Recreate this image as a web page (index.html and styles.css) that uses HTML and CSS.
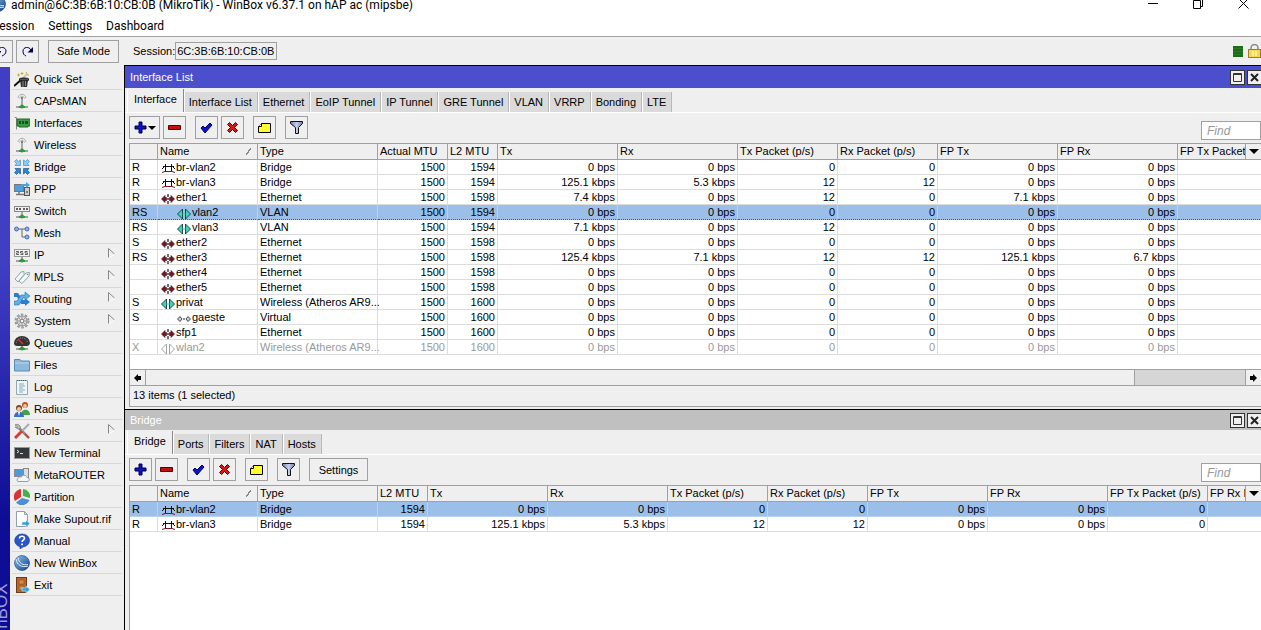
FILE: index.html
```html
<!DOCTYPE html>
<html lang="en">
<head>
  <meta charset="UTF-8" />
  <meta name="viewport" content="width=device-width, initial-scale=1.0"/>
  <title>WinBox</title>
  <link rel="stylesheet" href="styles.css">
</head>
<body>

  <!-- Icon set -->
  <svg class="icon-defs" aria-hidden="true">
    <defs>
      <linearGradient id="ballGrad" x1="0" y1="0" x2="1" y2="1">
        <stop offset="0" stop-color="#8fc3ee"/><stop offset="1" stop-color="#0e3f86"/>
      </linearGradient>
      <linearGradient id="funnelGrad" x1="0" y1="0" x2="1" y2="0">
        <stop offset="0" stop-color="#6f7fb0"/><stop offset="0.5" stop-color="#c4d0ec"/><stop offset="1" stop-color="#6f7fb0"/>
      </linearGradient>
      <g id="stand">
        <path d="M2 14h12" stroke="#555" /><path d="M5 14h6" stroke="#2f9a3a" stroke-width="2"/><circle cx="8" cy="13.5" r="2" fill="#2f9a3a"/>
      </g>
      <symbol id="quickset" viewBox="0 0 16 16">
        <path d="M0 15L8 8" stroke="#111" stroke-width="2"/><path d="M8 8l5-5" stroke="#bbb" stroke-width="1.500"/>
        <path d="M6 9h8l-1 7H7z" fill="#333"/><ellipse cx="10" cy="8.500" rx="5" ry="1.500" fill="#555" stroke="#111"/>
        <path d="M3 4h3M4.500 2.500v3M8 1v3M6.500 2.500h3M12 1l1 2M13 4h2" stroke="#c9b22c"/><path d="M9 10v6M11.500 10v5" stroke="#888"/>
      </symbol>
      <symbol id="antenna" viewBox="0 0 16 16">
        <path d="M4 5c1-5 7-5 8 0M5.500 5.500c1-3 4-3 5 0" fill="none" stroke="#aaa"/>
        <path d="M8 5v8" stroke="#777" stroke-width="1.200"/><circle cx="8" cy="5" r="1" fill="#666"/><use href="#stand"/>
      </symbol>
      <symbol id="card" viewBox="0 0 16 16">
        <path d="M.5 2.500h2v12" fill="none" stroke="#888"/><path d="M3 4h13v7h-2v1H5v-1H3z" fill="#3c9a45" stroke="#1e6a28"/>
        <path d="M5 6h2v3H5zM8 6h2v3H8zM11 6h3v3h-3z" fill="#1c5023"/>
      </symbol>
      <symbol id="bridge" viewBox="0 0 16 16">
        <g fill="#8fcaf0" stroke="#3f8fca" stroke-width=".7">
          <path d="M.5 2.500L2.500.5l2 2L6.500 1v5.500H1L2.500 4.500z"/><path d="M15.500 2.500l-2-2-2 2L9.500 1v5.500H15l-1.500-2z"/>
        </g>
        <g fill="#2f86d0" stroke="#1b5a98" stroke-width=".7">
          <path d="M.5 13.500l2 2 2-2 2 1.500V9.500H1l1.500 2z"/><path d="M15.500 13.500l-2 2-2-2-2 1.500V9.500H15l-1.500 2z"/>
        </g>
      </symbol>
      <symbol id="ppp" viewBox="0 0 16 16">
        <rect x=".5" y="3.500" width="9" height="7" fill="#4da0dc" stroke="#777"/><path d="M2 13.500h8M5 11v2" stroke="#777" stroke-width="1.500"/>
        <rect x="10.500" y="6.500" width="5" height="8" fill="#ccc" stroke="#555"/><path d="M12 11h2" stroke="#333"/>
        <path d="M7 3h5V1l4 3-4 3V5H7z" fill="#4aa3e0"/>
      </symbol>
      <symbol id="switch" viewBox="0 0 16 16">
        <rect x=".5" y="3.500" width="15" height="5" fill="#eee" stroke="#888"/>
        <path d="M2 6h2M5 6h2M9 6h2M12 6h2" stroke="#333" stroke-width="1.500"/><path d="M8 9v4" stroke="#666"/><use href="#stand"/>
      </symbol>
      <symbol id="mesh" viewBox="0 0 16 16">
        <path d="M4 4h8M8 4v8h4" fill="none" stroke="#666"/>
        <g fill="#8fb0ee" stroke="#4a68b8"><circle cx="2.500" cy="4" r="2"/><circle cx="13" cy="4" r="2"/><circle cx="13" cy="12" r="2"/></g>
      </symbol>
      <symbol id="ip" viewBox="0 0 16 16">
        <rect x=".5" y="2.500" width="15" height="7" fill="#f2f2f2" stroke="#999"/>
        <path d="M2 4.500h2.500V6H2.500v1.500H5M9 4.500H6.500V6H9v1.500H6.500M13.500 4.500H11V6h2.500v1.500H11" fill="none" stroke="#555" stroke-width=".9"/><path d="M8 10v3" stroke="#666"/><use href="#stand"/>
      </symbol>
      <symbol id="mpls" viewBox="0 0 16 16">
        <path d="M1 10l6-7 3-.5 0 3-6 7.500z" fill="#f4f8f8" stroke="#8aa5aa"/><path d="M5 12l7-8 3.500-.5-.5 3.500-7 7.500z" fill="#f4f8f8" stroke="#8aa5aa"/>
        <circle cx="13.500" cy="5.500" r=".8" fill="#77949a"/>
      </symbol>
      <symbol id="routing" viewBox="0 0 16 16">
        <path d="M0 2h4l5 7h2V7l5 4-5 4v-2H7L3 6H0z" fill="#2a7fc8"/>
        <path d="M0 14v-4h3l4-6h4V1l5 4-5 4V7H9l-4 7z" fill="#5cb0ea" stroke="#2a74b4" stroke-width=".6"/>
      </symbol>
      <symbol id="gear" viewBox="0 0 16 16">
        <circle cx="8" cy="8" r="6.500" fill="none" stroke="#999" stroke-width="2" stroke-dasharray="2.500 1.600"/>
        <circle cx="8" cy="8" r="5" fill="#ddd" stroke="#888"/><path d="M8 3v10M3 8h10M4.500 4.500l7 7M11.500 4.500l-7 7" stroke="#999"/><circle cx="8" cy="8" r="1.800" fill="#f4f4f4" stroke="#888"/>
      </symbol>
      <symbol id="gauge" viewBox="0 0 16 16">
        <path d="M0 8a8 7 0 0 1 16 0c0 2-2 3-3 3H3C1 11 0 10 0 8z" fill="#333"/>
        <path d="M2.500 8a5.500 5 0 0 1 11 0" fill="none" stroke="#999" stroke-dasharray="1 1"/><path d="M9 9L4 4" stroke="#e03020" stroke-width="1.500"/><path d="M8 11v3" stroke="#444"/><use href="#stand"/>
      </symbol>
      <symbol id="folder" viewBox="0 0 16 16">
        <path d="M.5 14V2.500H6L7 4h8.500v10z" fill="#8db9dc" stroke="#5b8cb4"/><path d="M1 6h14" stroke="#b9d7ee"/>
      </symbol>
      <symbol id="log" viewBox="0 0 16 16">
        <path d="M2.500 1.500h11v14h-11z" fill="#eef6f8" stroke="#92a8b0"/><path d="M3 1.500h10" stroke="#555" stroke-dasharray="1 1"/>
        <path d="M5 5h5M5 7h6M5 9h4M5 11h6M5 13h4" stroke="#8ab"/>
      </symbol>
      <symbol id="users" viewBox="0 0 16 16">
        <circle cx="11" cy="4" r="3" fill="#c84a28"/><circle cx="11" cy="5" r="1.900" fill="#f2c79c"/><path d="M7 14c0-7 9-7 9 0z" fill="#4aa04a"/>
        <circle cx="5" cy="7" r="3" fill="#7a4a20"/><circle cx="5" cy="8" r="2" fill="#f2c79c"/><path d="M0 16c0-7 10-7 10 0z" fill="#3a70c0"/><path d="M4 11h2l-1 4z" fill="#fff"/>
      </symbol>
      <symbol id="tools" viewBox="0 0 16 16">
        <path d="M15 15L5 5" stroke="#888" stroke-width="2.500"/><path d="M1 2c1-1 4-1 5 1s0 3-2 3L1 4l2 .5.5-1z" fill="#bbb" stroke="#777" stroke-width=".7"/>
        <path d="M7 9l8-8" stroke="#aaa" stroke-width="2"/><path d="M1 15l7-7" stroke="#d43c30" stroke-width="3"/><path d="M11 11l4 4" stroke="#d43c30" stroke-width="1.500"/>
      </symbol>
      <symbol id="terminal" viewBox="0 0 16 16">
        <rect x=".5" y="2.500" width="15" height="11" fill="#33383c" stroke="#999"/><path d="M3 5l2 1.500L3 8M6 8.500h3" fill="none" stroke="#ddd"/>
      </symbol>
      <symbol id="meta" viewBox="0 0 16 16">
        <rect x="9.500" y="1.500" width="5" height="10" fill="#ddd" stroke="#888"/><rect x=".5" y="2.500" width="9" height="7" fill="#4f9ad6" stroke="#889"/>
        <path d="M4 14.500h9c3 0 3-4 0-4-1-3-5-3-5.500-.5C4 9 2 14 4 14.500z" fill="#f3f7fb" stroke="#99a"/>
      </symbol>
      <symbol id="pie" viewBox="0 0 16 16">
        <path d="M7 8V0a8 8 0 0 0-6 12z" fill="#d83434"/><path d="M9 7V0a7.500 7.500 0 0 1 7 9z" fill="#43b048"/><path d="M8 9l7.500 2A8 8 0 0 1 2 13.500z" fill="#4a90d8"/>
      </symbol>
      <symbol id="supout" viewBox="0 0 16 16">
        <path d="M2.500.5h8l3 3v12h-11z" fill="#fafcfd" stroke="#8fa2ac"/><path d="M10.500.5v3h3" fill="none" stroke="#8fa2ac"/>
        <path d="M8 11h4V9l4 3.500-4 3.500v-2H8z" fill="#35a0d8" stroke="#e8f4fa" stroke-width=".5"/>
      </symbol>
      <symbol id="manual" viewBox="0 0 16 16">
        <path d="M8 1a7 6.500 0 0 1 1 13l-3 2v-2.200A7 6.500 0 0 1 8 1z" fill="#2a55c4" stroke="#1a3a96" stroke-width=".6"/>
        <path d="M5.500 5.500c0-3 5-3 5 0 0 1.500-2.500 1.500-2.500 3.500" fill="none" stroke="#fff" stroke-width="1.600"/><rect x="7.200" y="10.500" width="1.700" height="1.700" fill="#fff"/>
      </symbol>
      <symbol id="ball" viewBox="0 0 16 16">
        <circle cx="8" cy="8" r="7.500" fill="url(#ballGrad)" stroke="#0e3f86" stroke-width=".6"/>
        <path d="M2 4c1 6 6 9 12 7M4 2.500c1 6 5 8 10 7" fill="none" stroke="#e4f1fc"/>
      </symbol>
      <symbol id="exit" viewBox="0 0 16 16">
        <rect x="2.500" y=".5" width="10" height="15" fill="#b8682c" stroke="#6e3a14"/><path d="M5 3h5v4H5zM5 9h5v4H5z" fill="#d88c4c" stroke="#8a4a1c" stroke-width=".6"/>
        <path d="M8 11h4V9l4 3.500-4 3.500v-2H8z" fill="#35a0d8" stroke="#e8f4fa" stroke-width=".5"/>
      </symbol>
      <symbol id="sub" viewBox="0 0 8 10">
        <path d="M.5 9.500V.5L6.500 6" fill="none" stroke="#888"/><path d="M6.500 6.500L1 9.500" stroke="#fff"/>
      </symbol>

      <symbol id="plus" viewBox="0 0 13 13"><path d="M5 1h3v4h4v3H8v4H5V8H1V5h4z" fill="#0a14c8" stroke="#000040"/></symbol>
      <symbol id="minus" viewBox="0 0 13 13"><path d="M.5 4.500h12v4H.5z" fill="#c01010" stroke="#5a0000"/></symbol>
      <symbol id="check" viewBox="0 0 13 13"><path d="M1 7l2-2 2 2 5-5 2 2-7 8z" fill="#0a14c8" stroke="#000060"/></symbol>
      <symbol id="cross" viewBox="0 0 13 13"><path d="M1.500 3.500l2-2 3 3 3-3 2 2-3 3 3 3-2 2-3-3-3 3-2-2 3-3z" fill="#d01818" stroke="#600000"/></symbol>
      <symbol id="note" viewBox="0 0 13 13"><path d="M3.500 2.500h9v9H.5v-6z" fill="#ffff30" stroke="#000"/><path d="M3.500 2.500v3h-3" fill="#fff" stroke="#000"/></symbol>
      <symbol id="funnel" viewBox="0 0 13 13"><path d="M.5.5h12v2l-4 4v6h-3v-6l-5-4z" fill="url(#funnelGrad)" stroke="#111"/></symbol>
      <symbol id="undo" viewBox="0 0 13 13"><path d="M3 5c2-4 8-3 8 1 0 3-2 4-4 5M1 2v5h5z" fill="none" stroke="#000050"/></symbol>
      <symbol id="redo" viewBox="0 0 13 13"><path d="M10 5c-2-4-8-3-8 1 0 3 1 4 3 5" fill="none" stroke="#000050"/><path d="M12 2v5.500H6.500z" fill="#000050"/></symbol>

      <symbol id="if-bridge" viewBox="0 0 15 12">
        <path d="M2 3.500h11M4.500 1v8M10.500 1v8M1 6l3-3M14 6l-3-3" stroke="#111" fill="none"/><path d="M1 9.500l3-1h7l3 1" fill="none" stroke="#7a1420"/>
      </symbol>
      <symbol id="if-ether" viewBox="0 0 15 12">
        <path d="M.5 6L4 2.500v2h1.500v3H4v2zM13.500 6L10 2.500v2H8.500v3H10v2z" fill="#7a1420" stroke="#3a0a10" stroke-width=".6"/><path d="M7 1v3M7 5v2M7 8v3" stroke="#111" stroke-width="1.200"/>
      </symbol>
      <symbol id="if-wave" viewBox="0 0 15 12">
        <path d="M.5 6L5.500 1v10zM13.500 6L8.500 1v10z" fill="#3fd0b8" stroke="#123c3c" stroke-width=".9"/><path d="M5.500 5.500h3v1h-3z" fill="#3fd0b8"/>
      </symbol>
      <symbol id="if-virtual" viewBox="0 0 15 12">
        <path d="M.5 6L3 3.500 5 6 3 8.500zM13.500 6L11 3.500 9 6l2 2.500z" fill="#c4cce8" stroke="#222" stroke-width=".8"/><path d="M6 6h2" stroke="#222"/>
      </symbol>
      <symbol id="if-off" viewBox="0 0 15 12">
        <path d="M.5 6L5.500 1v10zM13.500 6L8.500 1v10z" fill="#fff" stroke="#999" stroke-width=".9"/>
      </symbol>
      <symbol id="win-max" viewBox="0 0 11 11"><path d="M1.500 1.500h8v8h-8z" fill="none" stroke="#333"/><path d="M1 2.500h9" stroke="#333"/></symbol>
      <symbol id="win-close" viewBox="0 0 11 11"><path d="M2 2l7 7M9 2L2 9" stroke="#222" stroke-width="2"/></symbol>
    </defs>
  </svg>

  <!-- Title bar -->
  <header class="titlebar">
    <svg class="app-icon" viewBox="0 0 16 16"><use href="#ball"/></svg>
    <h1>admin@6C:3B:6B:10:CB:0B (MikroTik) - WinBox v6.37.1 on hAP ac (mipsbe)</h1>
    <div class="window-controls">
      <button aria-label="Minimize"><svg viewBox="0 0 11 11"><path d="M0 5.500h10" stroke="#000"/></svg></button>
      <button aria-label="Restore"><svg viewBox="0 0 11 11"><path d="M.5 2.500h7v8h-7zM2.500 2V.5h7v8H8" fill="none" stroke="#000"/></svg></button>
      <button aria-label="Close"><svg viewBox="0 0 11 11"><path d="M.5.5l10 10M10.500.5l-10 10" stroke="#000"/></svg></button>
    </div>
  </header>

  <div class="menubar">
    <button>Session</button>
    <button>Settings</button>
    <button>Dashboard</button>
  </div>

  <div class="main-toolbar">
    <button class="btn" aria-label="Undo"><svg class="tool-icon"><use href="#undo"/></svg></button>
    <button class="btn" aria-label="Redo"><svg class="tool-icon"><use href="#redo"/></svg></button>
    <button class="btn safe-mode">Safe Mode</button>
    <label for="session">Session:</label>
    <input type="text" id="session" value="6C:3B:6B:10:CB:0B" readonly />
    <div class="indicators">
      <span class="cpu"></span>
      <svg class="lock" viewBox="0 0 13 14">
        <path d="M3 6V4a3.500 3.500 0 0 1 7 0v2" fill="none" stroke="#888" stroke-width="1.500"/><rect x=".5" y="5.500" width="12" height="8" fill="#f6d84c" stroke="#a07c20"/><path d="M5 7v5M8 7v5" stroke="#fff2a8" stroke-width="2"/>
      </svg>
    </div>
  </div>

  <div class="workspace">
    <div class="brand"><span class="brand-text">RouterOS WinBOX</span></div>

    <!-- Sidebar -->
    <nav class="sidebar">
      <button><svg><use href="#quickset"/></svg>Quick Set</button>
      <button><svg><use href="#antenna"/></svg>CAPsMAN</button>
      <button><svg><use href="#card"/></svg>Interfaces</button>
      <button><svg><use href="#antenna"/></svg>Wireless</button>
      <button><svg><use href="#bridge"/></svg>Bridge</button>
      <button><svg><use href="#ppp"/></svg>PPP</button>
      <button><svg><use href="#switch"/></svg>Switch</button>
      <button><svg><use href="#mesh"/></svg>Mesh</button>
      <button><svg><use href="#ip"/></svg>IP<svg class="sub"><use href="#sub"/></svg></button>
      <button><svg><use href="#mpls"/></svg>MPLS<svg class="sub"><use href="#sub"/></svg></button>
      <button><svg><use href="#routing"/></svg>Routing<svg class="sub"><use href="#sub"/></svg></button>
      <button><svg><use href="#gear"/></svg>System<svg class="sub"><use href="#sub"/></svg></button>
      <button><svg><use href="#gauge"/></svg>Queues</button>
      <button><svg><use href="#folder"/></svg>Files</button>
      <button><svg><use href="#log"/></svg>Log</button>
      <button><svg><use href="#users"/></svg>Radius</button>
      <button><svg><use href="#tools"/></svg>Tools<svg class="sub"><use href="#sub"/></svg></button>
      <button><svg><use href="#terminal"/></svg>New Terminal</button>
      <button><svg><use href="#meta"/></svg>MetaROUTER</button>
      <button><svg><use href="#pie"/></svg>Partition</button>
      <button><svg><use href="#supout"/></svg>Make Supout.rif</button>
      <button><svg><use href="#manual"/></svg>Manual</button>
      <button><svg><use href="#ball"/></svg>New WinBox</button>
      <button><svg><use href="#exit"/></svg>Exit</button>
    </nav>

    <main class="windows">
      <!-- Interface List -->
      <section class="window active">
        <div class="window-title">
          <h2>Interface List</h2>
          <button aria-label="Maximize"><svg><use href="#win-max"/></svg></button>
          <button aria-label="Close"><svg><use href="#win-close"/></svg></button>
        </div>
        <div class="tabs">
          <button class="current">Interface</button>
          <button>Interface List</button>
          <button>Ethernet</button>
          <button>EoIP Tunnel</button>
          <button>IP Tunnel</button>
          <button>GRE Tunnel</button>
          <button>VLAN</button>
          <button>VRRP</button>
          <button>Bonding</button>
          <button>LTE</button>
        </div>
        <div class="tools">
          <div class="group">
            <button class="btn add-menu" aria-label="Add"><svg class="tool-icon"><use href="#plus"/></svg></button>
            <button class="btn" aria-label="Remove"><svg class="tool-icon"><use href="#minus"/></svg></button>
          </div>
          <div class="group">
            <button class="btn" aria-label="Enable"><svg class="tool-icon"><use href="#check"/></svg></button>
            <button class="btn" aria-label="Disable"><svg class="tool-icon"><use href="#cross"/></svg></button>
          </div>
          <button class="btn" aria-label="Comment"><svg class="tool-icon"><use href="#note"/></svg></button>
          <button class="btn" aria-label="Filter"><svg class="tool-icon"><use href="#funnel"/></svg></button>
          <input class="find" type="text" placeholder="Find" aria-label="Find interface" />
        </div>
        <div class="grid">
          <table id="interfaces"></table>
          <button class="columns" aria-label="Columns"></button>
        </div>
        <div class="hscroll">
          <button class="prev" aria-label="Scroll left"></button>
          <div class="track"><div class="thumb"></div></div>
          <button class="next" aria-label="Scroll right"></button>
        </div>
        <div class="status">13 items (1 selected)</div>
      </section>

      <!-- Bridge -->
      <section class="window fill">
        <div class="window-title">
          <h2>Bridge</h2>
          <button aria-label="Maximize"><svg><use href="#win-max"/></svg></button>
          <button aria-label="Close"><svg><use href="#win-close"/></svg></button>
        </div>
        <div class="tabs">
          <button class="current">Bridge</button>
          <button>Ports</button>
          <button>Filters</button>
          <button>NAT</button>
          <button>Hosts</button>
        </div>
        <div class="tools">
          <div class="group">
            <button class="btn" aria-label="Add"><svg class="tool-icon"><use href="#plus"/></svg></button>
            <button class="btn" aria-label="Remove"><svg class="tool-icon"><use href="#minus"/></svg></button>
          </div>
          <div class="group">
            <button class="btn" aria-label="Enable"><svg class="tool-icon"><use href="#check"/></svg></button>
            <button class="btn" aria-label="Disable"><svg class="tool-icon"><use href="#cross"/></svg></button>
          </div>
          <button class="btn" aria-label="Comment"><svg class="tool-icon"><use href="#note"/></svg></button>
          <button class="btn" aria-label="Filter"><svg class="tool-icon"><use href="#funnel"/></svg></button>
          <button class="btn settings">Settings</button>
          <input class="find" type="text" placeholder="Find" aria-label="Find bridge" />
        </div>
        <div class="grid">
          <table id="bridges"></table>
          <button class="columns" aria-label="Columns"></button>
        </div>
      </section>
    </main>
  </div>

  <script>
    // [label, column class]
    const interfaceColumns = [
      ["", "c-flag"], ["Name", "c-name"], ["Type", "c-type"], ["Actual MTU", "c-mtu"], ["L2 MTU", "c-l2"],
      ["Tx", "c-rate"], ["Rx", "c-rate"], ["Tx Packet (p/s)", "c-packet"], ["Rx Packet (p/s)", "c-packet"],
      ["FP Tx", "c-rate"], ["FP Rx", "c-rate"], ["FP Tx Packet (p/s)", "c-packet"]
    ];
    const bridgeColumns = [
      ["", "c-flag"], ["Name", "c-name"], ["Type", "c-type"], ["L2 MTU", "c-l2"],
      ["Tx", "c-rate"], ["Rx", "c-rate"], ["Tx Packet (p/s)", "c-packet"], ["Rx Packet (p/s)", "c-packet"],
      ["FP Tx", "c-rate"], ["FP Rx", "c-rate"], ["FP Tx Packet (p/s)", "c-packet"], ["FP Rx Packet (p/s)", "c-packet"]
    ];

    const interfaces = [
      { icon: "bridge", cells: ["R", "br-vlan2", "Bridge", 1500, 1594, "0 bps", "0 bps", 0, 0, "0 bps", "0 bps", ""] },
      { icon: "bridge", cells: ["R", "br-vlan3", "Bridge", 1500, 1594, "125.1 kbps", "5.3 kbps", 12, 12, "0 bps", "0 bps", ""] },
      { icon: "ether", cells: ["R", "ether1", "Ethernet", 1500, 1598, "7.4 kbps", "0 bps", 12, 0, "7.1 kbps", "0 bps", ""] },
      { icon: "wave", state: "child selected focused", cells: ["RS", "vlan2", "VLAN", 1500, 1594, "0 bps", "0 bps", 0, 0, "0 bps", "0 bps", ""] },
      { icon: "wave", state: "child", cells: ["RS", "vlan3", "VLAN", 1500, 1594, "7.1 kbps", "0 bps", 12, 0, "0 bps", "0 bps", ""] },
      { icon: "ether", cells: ["S", "ether2", "Ethernet", 1500, 1598, "0 bps", "0 bps", 0, 0, "0 bps", "0 bps", ""] },
      { icon: "ether", cells: ["RS", "ether3", "Ethernet", 1500, 1598, "125.4 kbps", "7.1 kbps", 12, 12, "125.1 kbps", "6.7 kbps", ""] },
      { icon: "ether", cells: ["", "ether4", "Ethernet", 1500, 1598, "0 bps", "0 bps", 0, 0, "0 bps", "0 bps", ""] },
      { icon: "ether", cells: ["", "ether5", "Ethernet", 1500, 1598, "0 bps", "0 bps", 0, 0, "0 bps", "0 bps", ""] },
      { icon: "wave", cells: ["S", "privat", "Wireless (Atheros AR9...", 1500, 1600, "0 bps", "0 bps", 0, 0, "0 bps", "0 bps", ""] },
      { icon: "virtual", state: "child", cells: ["S", "gaeste", "Virtual", 1500, 1600, "0 bps", "0 bps", 0, 0, "0 bps", "0 bps", ""] },
      { icon: "ether", cells: ["", "sfp1", "Ethernet", 1500, 1600, "0 bps", "0 bps", 0, 0, "0 bps", "0 bps", ""] },
      { icon: "off", state: "disabled", cells: ["X", "wlan2", "Wireless (Atheros AR9...", 1500, 1600, "0 bps", "0 bps", 0, 0, "0 bps", "0 bps", ""] }
    ];
    const bridges = [
      { icon: "bridge", state: "selected", cells: ["R", "br-vlan2", "Bridge", 1594, "0 bps", "0 bps", 0, 0, "0 bps", "0 bps", 0, ""] },
      { icon: "bridge", cells: ["R", "br-vlan3", "Bridge", 1594, "125.1 kbps", "5.3 kbps", 12, 12, "0 bps", "0 bps", 0, ""] }
    ];

    function fillTable(id, columns, rows) {
      const cols = columns.map(c => `<col class="${c[1]}">`).join("");
      const head = columns.map(c => `<th>${c[0]}${c[0] === "Name" ? '<i class="sort"></i>' : ""}</th>`).join("");
      const body = rows.map(row => {
        const cells = row.cells.map((value, i) => {
          if (i === 1) return `<td class="name"><svg><use href="#if-${row.icon}"/></svg>${value}</td>`;
          return `<td${i > 2 ? ' class="num"' : ""}>${value}</td>`;
        }).join("");
        return `<tr class="${row.state || ""}">${cells}</tr>`;
      }).join("");
      document.getElementById(id).innerHTML =
        `<colgroup>${cols}</colgroup><thead><tr>${head}</tr></thead><tbody>${body}</tbody>`;
    }

    fillTable("interfaces", interfaceColumns, interfaces);
    fillTable("bridges", bridgeColumns, bridges);
  </script>
</body>
</html>
```
FILE: styles.css
```css
:root {
  --bg: #efefef;
  --line: #a0a0a0;
  --grid-line: #dcdcdc;
  --active: #4c4fcb;
  --inactive: #c0c0c0;
  --selected: #9bbfe9;
}

* {
  box-sizing: border-box;
}

body {
  margin: 0;
  height: 100vh;
  overflow: hidden;
  display: flex;
  flex-direction: column;
  background: var(--bg);
  color: #000;
  font-family: "Liberation Sans", Arial, sans-serif;
  font-size: 11px;
}

button,
input {
  font: inherit;
  color: inherit;
  padding: 0;
  border: none;
  border-radius: 0;
  background: none;
}

h1,
h2 {
  margin: 0;
  font-size: inherit;
  font-weight: normal;
}

.icon-defs {
  position: absolute;
  width: 0;
  height: 0;
}

/* Title bar and menu */
.titlebar {
  flex: none;
  display: flex;
  align-items: flex-start;
  height: 15px;
  background: #fff;
  font-family: Roboto, sans-serif;
  font-size: 12px;
  line-height: 11px;
}

.app-icon {
  flex: none;
  width: 16px;
  height: 16px;
  margin: -4px 5px 0 -10px;
}

.window-controls {
  display: flex;
  gap: 34px;
  margin-left: auto;
  padding-right: 12px;
}

.window-controls button {
  height: 11px;
  margin-top: -2px;
}

.window-controls svg {
  display: block;
  width: 11px;
  height: 11px;
}

.menubar {
  flex: none;
  display: flex;
  gap: 14px;
  height: 22px;
  background: #fff;
  border-bottom: 1px solid var(--line);
  font-family: Roboto, sans-serif;
  font-size: 12px;
}

.menubar button:first-child {
  margin-left: -8px;
}

/* Toolbar */
.main-toolbar {
  flex: none;
  display: flex;
  align-items: center;
  height: 28px;
  margin-left: -10px;
}

.btn {
  flex: none;
  display: flex;
  align-items: center;
  justify-content: center;
  width: 23px;
  height: 23px;
  border: 1px solid var(--line);
}

.tool-icon {
  width: 13px;
  height: 13px;
}

.main-toolbar .btn {
  margin-right: 3px;
}

.main-toolbar .safe-mode {
  width: 71px;
  margin: 0 14px 0 6px;
}

.main-toolbar input {
  width: 102px;
  height: 18px;
  padding: 0 1px;
  border: 1px solid var(--line);
}

.indicators {
  display: flex;
  align-items: center;
  gap: 5px;
  margin-left: auto;
}

.cpu {
  width: 10px;
  height: 11px;
  background: repeating-linear-gradient(#1d6b1d 0 2px, #2c7a1c 2px 3px);
}

.lock {
  width: 13px;
  height: 14px;
}

/* Workspace */
.workspace {
  flex: 1;
  display: flex;
  min-height: 0;
}

.brand {
  flex: none;
  display: flex;
  flex-direction: column;
  width: 10px;
  margin-top: 2px;
  overflow: hidden;
  background: linear-gradient(#403fc4 0%, #403fc4 35%, #0d0d96 80%);
}

.brand-text {
  align-self: flex-end;
  height: 160px;
  margin: auto 0 -114px;
  text-align: right;
  writing-mode: vertical-rl;
  transform: rotate(180deg);
  color: #9c9cdc;
  font-size: 17px;
  line-height: 16px;
}

.sidebar {
  flex: none;
  display: flex;
  flex-direction: column;
  width: 115px;
  padding: 3px 2px 0;
  border-right: 1px solid #000;
}

.sidebar button {
  display: flex;
  align-items: center;
  gap: 4px;
  height: 22px;
  padding: 0 2px;
  border-bottom: 1px solid #d8d8d8;
  text-align: left;
  white-space: nowrap;
}

.sidebar svg {
  flex: none;
  width: 16px;
  height: 16px;
}

.sidebar .sub {
  width: 8px;
  height: 10px;
  margin: 0 4px 4px auto;
}

/* MDI windows */
.windows {
  flex: 1;
  display: flex;
  flex-direction: column;
  min-width: 0;
  overflow: hidden;
}

.window {
  display: flex;
  flex-direction: column;
  border-top: 1px solid #000;
}

.fill {
  flex: 1;
}

.window-title {
  display: flex;
  align-items: center;
  gap: 2px;
  height: 20px;
  margin-right: -1px;
  padding-left: 5px;
  background: var(--inactive);
  color: #fff;
}

.active .window-title {
  height: 22px;
  background: var(--active);
}

.window-title h2 {
  flex: 1;
}

.window-title button {
  display: flex;
  align-items: center;
  justify-content: center;
  width: 15px;
  height: 15px;
  border: 1px solid #333;
  background: var(--bg);
}

.window-title svg {
  width: 11px;
  height: 11px;
}

.tabs {
  display: flex;
  align-items: flex-end;
  height: 25px;
  padding-left: 2px;
  border-bottom: 1px solid #fff;
}

.tabs button {
  height: 20px;
  padding: 0 5px 0 4px;
  border-left: 1px solid #fff;
  border-right: 1px solid #b8b8b8;
  background: #dadada;
  white-space: nowrap;
}

.tabs .current {
  height: 23px;
  padding: 0 6px 3px;
  border-right-color: #888;
  background: var(--bg);
}

.tools {
  display: flex;
  align-items: center;
  gap: 9px;
  height: 29px;
  padding-left: 4px;
}

.group {
  display: flex;
  gap: 3px;
}

.tools .add-menu {
  width: 31px;
  gap: 1px;
}

.add-menu::after,
.columns::after {
  content: "";
  border: 4px solid transparent;
  border-top-color: #000;
  border-bottom: none;
}

.tools .settings {
  width: 59px;
}

.find {
  align-self: flex-end;
  width: 60px;
  height: 19px;
  margin: 0 0 2px auto;
  padding: 0 5px;
  border: 1px solid var(--line);
  background: #fff;
  font-size: 12px;
}

.find::placeholder {
  color: #999;
  font-style: italic;
  opacity: 1;
}

/* Tables */
.grid {
  position: relative;
  margin: 1px 0 0 4px;
  padding-bottom: 14px;
  overflow: hidden;
  background: #fff;
  border-top: 1px solid var(--line);
  border-left: 1px solid var(--line);
}

.fill .grid {
  flex: 1;
}

table {
  table-layout: fixed;
  width: 1148px;
  border-collapse: separate;
  border-spacing: 0;
}

.c-flag { width: 28px; }
.c-name { width: 100px; }
.c-mtu { width: 70px; }
.c-l2 { width: 50px; }
.c-type,
.c-rate { width: 120px; }
.c-packet { width: 100px; }

th,
td {
  height: 15px;
  padding: 0 2px;
  border-right: 1px solid var(--grid-line);
  border-bottom: 1px solid var(--grid-line);
  font-weight: normal;
  line-height: 14px;
  text-align: left;
  white-space: nowrap;
}

th {
  height: 16px;
  line-height: 15px;
  overflow: hidden;
  background: var(--bg);
  border-color: var(--line);
}

.sort {
  float: right;
  width: 5px;
  height: 7px;
  margin: 4px 4px 0 0;
  background: linear-gradient(to bottom right, transparent 42%, #888 42%, #888 58%, transparent 58%);
}

.num {
  text-align: right;
}

.name svg {
  width: 15px;
  height: 12px;
  margin: -2px 0 -2px 1px;
  vertical-align: -2px;
}

.child .name {
  padding-left: 18px;
}

.selected td {
  background: var(--selected);
  border-color: #b8d2f0;
}

.focused td {
  border-bottom: 1px dotted #557;
}

.disabled td {
  color: #999;
}

.columns {
  position: absolute;
  top: 0;
  right: 0;
  display: flex;
  align-items: center;
  justify-content: center;
  width: 16px;
  height: 16px;
  border-left: 1px solid var(--line);
  border-bottom: 1px solid var(--line);
  background: var(--bg);
}

.columns::after {
  border-width: 5px 5px 0;
}

/* Scrollbar and status line */
.hscroll {
  display: flex;
  height: 17px;
  margin-left: 4px;
  border: 1px solid var(--line);
  border-right: none;
}

.hscroll button {
  display: flex;
  align-items: center;
  justify-content: center;
  width: 16px;
}

.prev {
  border-right: 1px solid var(--line);
}

.next {
  border-left: 1px solid var(--line);
}

.prev::before,
.next::after {
  content: "";
  border: 4px solid transparent;
  border-right-color: #000;
  border-left: none;
}

.next::after {
  border-right: none;
  border-left: 4px solid #000;
}

.prev::after,
.next::before {
  content: "";
  width: 3px;
  height: 4px;
  background: #000;
}

.track {
  flex: 1;
  background: #d6d6d6;
}

.thumb {
  width: 90%;
  height: 15px;
  background: var(--bg);
  border-right: 1px solid var(--line);
}

.status {
  height: 21px;
  margin: 0 0 2px 4px;
  padding-left: 3px;
  border-left: 1px solid var(--line);
  border-bottom: 1px solid var(--line);
  line-height: 19px;
}
```
